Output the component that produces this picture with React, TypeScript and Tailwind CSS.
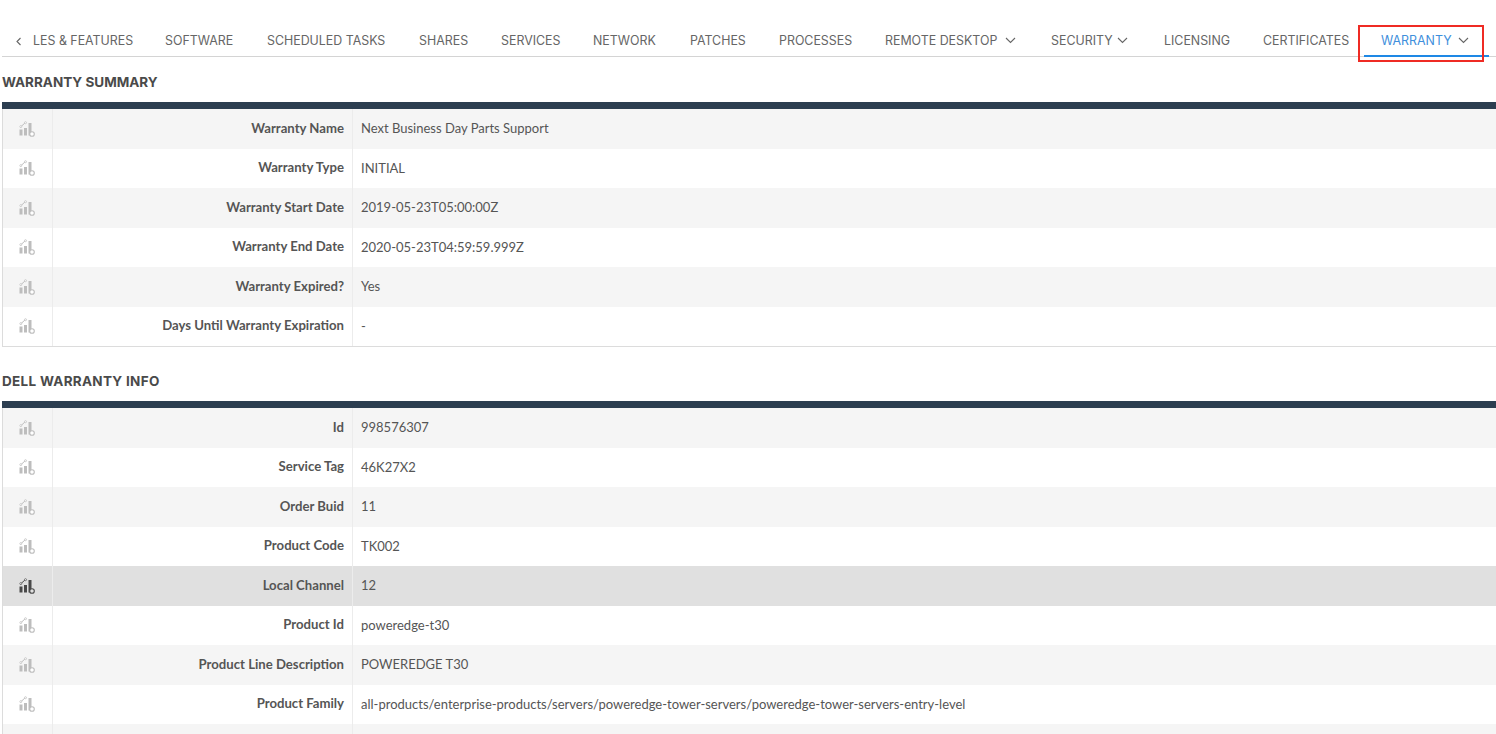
import React from "react";

const Chevron = () => (
  <svg width="11" height="7" viewBox="0 0 11 7" fill="none" className="shrink-0">
    <path d="M1 1l4.5 4.5L10 1" stroke="#666" strokeWidth="1.1" />
  </svg>
);

const ChartIcon = ({ active }: { active?: boolean }) => {
  const c = active ? "#4a4a4a" : "#bdbdbd";
  return (
    <svg width="16" height="16" viewBox="0 0 16 16" fill="none">
      <rect x="0.5" y="8.5" width="3" height="6" fill={c} />
      <rect x="5" y="7" width="3" height="7.5" fill={c} />
      <rect x="9.5" y="2" width="3" height="12.5" fill={c} />
      <path d="M1.5 6L6.5 1.5" stroke={c} strokeWidth="1" />
      <circle cx="1.8" cy="5.6" r="1" fill="#fff" stroke={c} strokeWidth="0.7" />
      <circle cx="6.5" cy="1.7" r="1" fill="#fff" stroke={c} strokeWidth="0.7" />
      <circle cx="13" cy="13" r="2.3" fill={active ? "#e0e0e0" : "#fff"} stroke={c} strokeWidth="1.1" />
    </svg>
  );
};

const tabs: { label: string; w: string }[] = [
  { label: "LES & FEATURES", w: "w-[100px]" },
  { label: "SOFTWARE", w: "w-[70px]" },
  { label: "SCHEDULED TASKS", w: "w-[120px]" },
  { label: "SHARES", w: "w-[50px]" },
  { label: "SERVICES", w: "w-[60px]" },
  { label: "NETWORK", w: "w-[65px]" },
  { label: "PATCHES", w: "w-[57px]" },
  { label: "PROCESSES", w: "w-[74px]" },
];

type Row = { k: string; v: string; active?: boolean };

const summary: Row[] = [
  { k: "Warranty Name", v: "Next Business Day Parts Support" },
  { k: "Warranty Type", v: "INITIAL" },
  { k: "Warranty Start Date", v: "2019-05-23T05:00:00Z" },
  { k: "Warranty End Date", v: "2020-05-23T04:59:59.999Z" },
  { k: "Warranty Expired?", v: "Yes" },
  { k: "Days Until Warranty Expiration", v: "-" },
];

const dell: Row[] = [
  { k: "Id", v: "998576307" },
  { k: "Service Tag", v: "46K27X2" },
  { k: "Order Buid", v: "11" },
  { k: "Product Code", v: "TK002" },
  { k: "Local Channel", v: "12", active: true },
  { k: "Product Id", v: "poweredge-t30" },
  { k: "Product Line Description", v: "POWEREDGE T30" },
  { k: "Product Family", v: "all-products/enterprise-products/servers/poweredge-tower-servers/poweredge-tower-servers-entry-level" },
  { k: "", v: "" },
];

const Table = ({ rows, bottom }: { rows: Row[]; bottom?: boolean }) => (
  <div className={`ml-[2px] border-l border-[#dcdcdc] ${bottom ? "border-b" : ""}`}>
    <div className="-ml-px h-[7px] bg-[#2c3e50]" />
    {rows.map((r, i) => (
      <div
        key={i}
        className={`flex h-[39.5px] items-center ${r.active ? "bg-[#e0e0e0]" : i % 2 === 0 ? "bg-[#f5f5f5]" : "bg-white"}`}
      >
        <div className="flex h-full w-[50px] shrink-0 items-center justify-center border-r border-[#ececec] pr-[2px]">
          {r.k && <ChartIcon active={r.active} />}
        </div>
        <div className="flex h-full w-[300px] shrink-0 items-center justify-end border-r border-[#ececec] pr-2 text-[13.15px] font-bold text-[#555]">
          {r.k}
        </div>
        <div className="pl-2 text-[13px] text-[#555]">{r.v}</div>
      </div>
    ))}
  </div>
);

export default function App() {
  return (
    <div className="h-[734px] w-[1496px] overflow-hidden bg-white font-['Lato',sans-serif]">
      <div className="relative ml-[2px] mt-[22px] flex h-[35px] items-center border-b border-[#d4d4d4] pt-[4px] font-['Inter',sans-serif] text-[12.4px] text-[#666]">
        <svg width="7" height="9" viewBox="0 0 7 9" fill="none" className="ml-[13px] mr-[11px]">
          <path d="M5.5 1L2 4.5L5.5 8" stroke="#666" strokeWidth="1.1" />
        </svg>
        <div className="flex gap-8 whitespace-nowrap">
          {tabs.map((t) => (
            <span key={t.label} className={t.w}>{t.label}</span>
          ))}
          <span className="flex w-[134px] items-center gap-[5px]">
            <span className="w-[115px]">REMOTE DESKTOP</span>
            <Chevron />
          </span>
          <span className="flex w-[81px] items-center gap-[5px]">
            <span className="w-[61px]">SECURITY</span>
            <Chevron />
          </span>
          <span className="w-[67px]">LICENSING</span>
          <span className="w-[86px]">CERTIFICATES</span>
          <span className="flex items-center gap-[6px] text-[#3f8fdc]">
            <span className="w-[71px]">WARRANTY</span>
            <Chevron />
          </span>
        </div>
        <div className="absolute bottom-[-1px] left-[1362px] h-[2px] w-[125px] bg-[#1e88e5]" />
        <div className="absolute left-[1356px] top-[3px] h-[37px] w-[126px] border-2 border-[#ef2b24]" />
      </div>

      <h2 className="ml-[2px] mt-[17px] h-[28px] font-['Inter',sans-serif] text-[13.5px] font-bold leading-[17px] text-[#4a4a4a]">
        WARRANTY SUMMARY
      </h2>
      <Table rows={summary} bottom />

      <h2 className="ml-[2px] mt-[26px] h-[28px] font-['Inter',sans-serif] text-[13.5px] font-bold leading-[17px] tracking-[0.3px] text-[#4a4a4a]">
        DELL WARRANTY INFO
      </h2>
      <Table rows={dell} />
    </div>
  );
}
